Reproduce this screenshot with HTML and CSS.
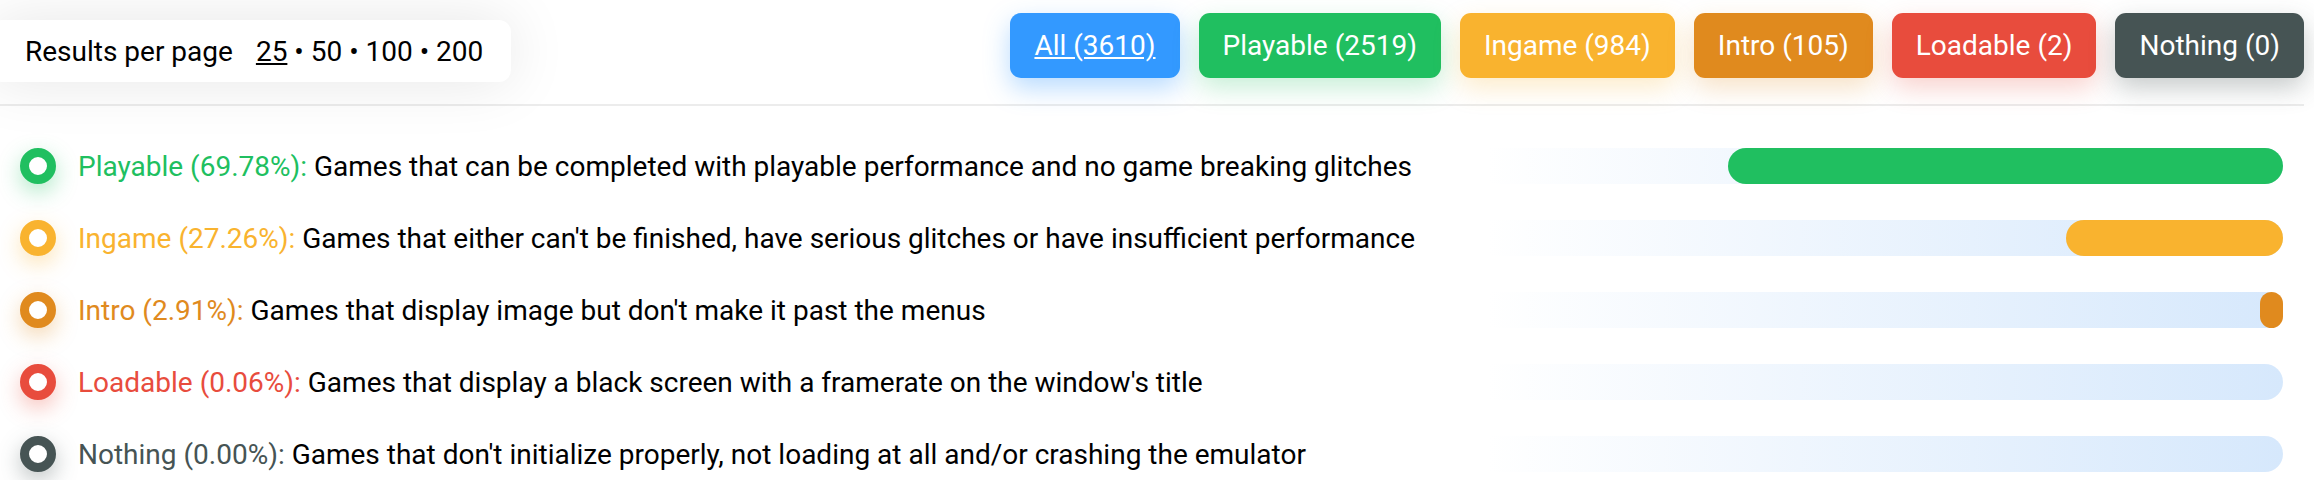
FILE: index.html
```html
<!DOCTYPE html>
<html lang="en">
<head>
  <meta charset="UTF-8">
  <meta name="viewport" content="width=device-width, initial-scale=1.0">
  <title>Compatibility</title>
  <link rel="stylesheet" href="styles.css">
</head>
<body>
  <header class="toolbar">
    <div class="per-page">
      <span>Results per page</span>
      <span class="per-page-options"><a class="active" href="#">25</a> • <a href="#">50</a> • <a href="#">100</a> • <a href="#">200</a></span>
    </div>
    <nav class="filters">
      <a class="filter all active" href="#">All (3610)</a>
      <a class="filter playable" href="#">Playable (2519)</a>
      <a class="filter ingame" href="#">Ingame (984)</a>
      <a class="filter intro" href="#">Intro (105)</a>
      <a class="filter loadable" href="#">Loadable (2)</a>
      <a class="filter nothing" href="#">Nothing (0)</a>
    </nav>
  </header>

  <main class="legend">
    <div class="legend-row">
      <span class="dot playable"></span>
      <p class="legend-text"><span class="label playable">Playable (69.78%):</span> Games that can be completed with playable performance and no game breaking glitches</p>
      <div class="bar"><div class="bar-fill playable" style="width: 69.78%"></div></div>
    </div>
    <div class="legend-row">
      <span class="dot ingame"></span>
      <p class="legend-text"><span class="label ingame">Ingame (27.26%):</span> Games that either can't be finished, have serious glitches or have insufficient performance</p>
      <div class="bar"><div class="bar-fill ingame" style="width: 27.26%"></div></div>
    </div>
    <div class="legend-row">
      <span class="dot intro"></span>
      <p class="legend-text"><span class="label intro">Intro (2.91%):</span> Games that display image but don't make it past the menus</p>
      <div class="bar"><div class="bar-fill intro" style="width: 2.91%"></div></div>
    </div>
    <div class="legend-row">
      <span class="dot loadable"></span>
      <p class="legend-text"><span class="label loadable">Loadable (0.06%):</span> Games that display a black screen with a framerate on the window's title</p>
      <div class="bar"><div class="bar-fill loadable" style="width: 0px"></div></div>
    </div>
    <div class="legend-row">
      <span class="dot nothing"></span>
      <p class="legend-text"><span class="label nothing">Nothing (0.00%):</span> Games that don't initialize properly, not loading at all and/or crashing the emulator</p>
      <div class="bar"><div class="bar-fill nothing" style="width: 0px"></div></div>
    </div>
  </main>
</body>
</html>
```

FILE: styles.css
```css
body { font-family: Roboto, 'Noto Sans', sans-serif; font-size: 28px; margin: 0; padding: 0; background: #fff; color: #000; overflow: hidden; }

/* top bar */
.toolbar {
  display: flex;
  justify-content: space-between;
  align-items: flex-start;
  height: 104px;
  margin-right: 10px;
  border-bottom: 2px solid #ececec;
}
.per-page {
  display: flex;
  align-items: center;
  height: 62px;
  margin: 20px 0 0 -10px;
  padding: 0 28px 0 35px;
  background: white;
  border-radius: 12px;
  box-shadow: 0 0 60px rgba(0,0,0,0.1);
}
.per-page-options { margin-left: 23px; }
.per-page-options a { color: #000; text-decoration: none; }
.per-page-options a.active { text-decoration: underline; }

.filters {
  display: flex;
  gap: 19px;
  margin-top: 13px;
}
.filter {
  padding: 16px 24px;
  line-height: 33px;
  border-radius: 11px;
  color: white;
  text-decoration: none;
  white-space: nowrap;
}
.filter.active { text-decoration: underline; }
.filter.all { background: #3399ff; box-shadow: 0 10px 26px rgba(51,153,255,0.35); }
.filter.playable { background: #20bf60; box-shadow: 0 10px 26px rgba(32,191,96,0.25); }
.filter.ingame { background: #f9b32f; box-shadow: 0 10px 26px rgba(249,179,47,0.25); }
.filter.intro { background: #e08a1e; box-shadow: 0 10px 26px rgba(224,138,30,0.25); }
.filter.loadable { background: #e84c3d; box-shadow: 0 10px 26px rgba(232,76,61,0.25); }
.filter.nothing { background: #465454; box-shadow: 0 10px 26px rgba(70,84,84,0.3); }

/* legend */
.legend { padding: 24px 31px 0 20px; }
.legend-row {
  display: flex;
  align-items: center;
  height: 72px;
}
.dot {
  flex-shrink: 0;
  width: 36px;
  height: 36px;
  box-sizing: border-box;
  border: 9px solid;
  border-radius: 50%;
  background: white;
  margin-right: 22px;
}
.dot.playable { border-color: #20bf60; box-shadow: 0 8px 22px rgba(32,191,96,0.35); }
.dot.ingame { border-color: #f9b32f; box-shadow: 0 8px 22px rgba(249,179,47,0.35); }
.dot.intro { border-color: #e08a1e; box-shadow: 0 8px 22px rgba(224,138,30,0.35); }
.dot.loadable { border-color: #e84c3d; box-shadow: 0 8px 22px rgba(232,76,61,0.35); }
.dot.nothing { border-color: #465454; box-shadow: 0 8px 22px rgba(70,84,84,0.35); }

.legend-text { flex: 1; margin: 0; white-space: nowrap; }
.label.playable { color: #20bf60; }
.label.ingame { color: #f9b32f; }
.label.intro { color: #e08a1e; }
.label.loadable { color: #e84c3d; }
.label.nothing { color: #465454; }

.bar {
  flex-shrink: 0;
  display: flex;
  justify-content: flex-end;
  width: 795px;
  height: 36px;
  border-radius: 0 18px 18px 0;
  background: linear-gradient(to right, rgba(214,232,252,0), #d6e8fc);
}
.bar-fill { height: 100%; border-radius: 18px; }
.bar-fill.playable { background: #20bf60; }
.bar-fill.ingame { background: #f9b32f; }
.bar-fill.intro { background: #e08a1e; }
.bar-fill.loadable { background: #e84c3d; }
.bar-fill.nothing { background: #465454; }
```
